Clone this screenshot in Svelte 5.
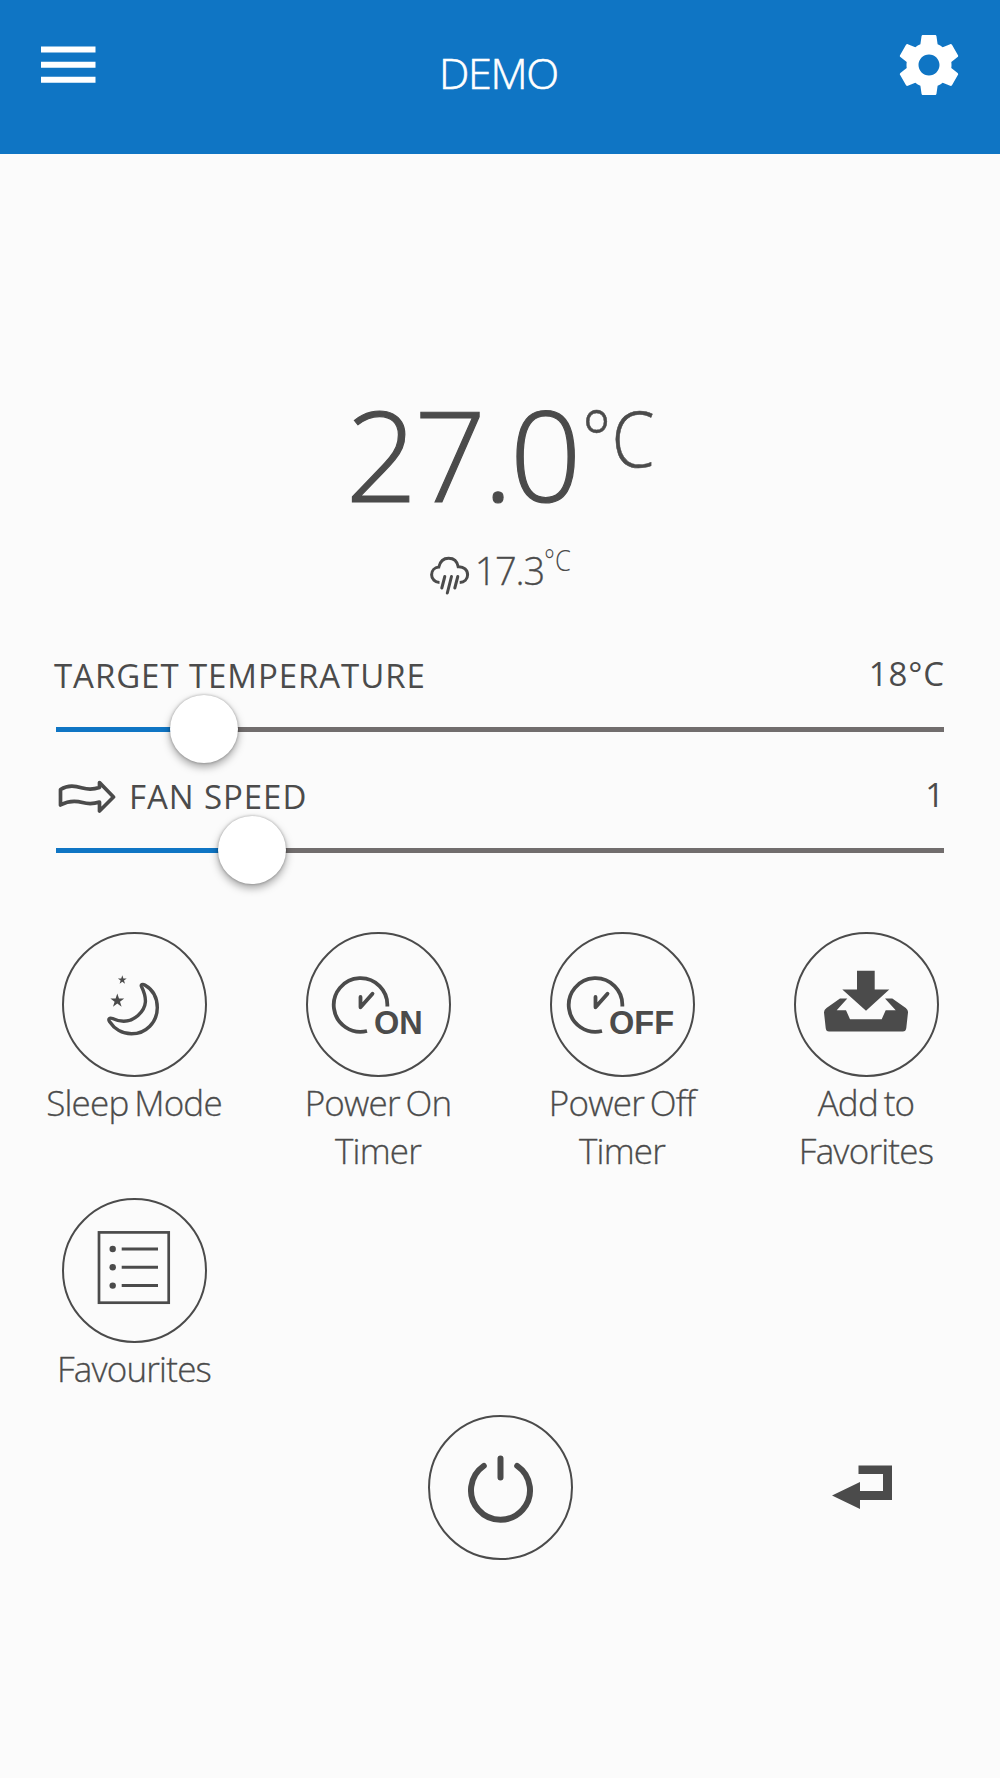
<script lang="ts">
  let roomTemperature = "27.0";
  let outdoorTemperature = "17.3";

  const sliders = [
    { id: "target", label: "TARGET TEMPERATURE", value: "18°C", position: 16.7 },
    { id: "fan", label: "FAN SPEED", value: "1", position: 22.1 },
  ];

  const actions = [
    { id: "sleep", lines: ["Sleep Mode"] },
    { id: "on", lines: ["Power On", "Timer"] },
    { id: "off", lines: ["Power Off", "Timer"] },
    { id: "add", lines: ["Add to", "Favorites"] },
    { id: "list", lines: ["Favourites"] },
  ];
</script>

<div class="screen">
  <header class="toolbar">
    <button class="icon-btn" aria-label="Menu">
      <svg width="55" height="60" viewBox="0 0 55 60">
        <path d="M0 14.5h54.5M0 29.7h54.5M0 44.8h54.5" stroke="#fff" stroke-width="6" />
      </svg>
    </button>
    <h1>DEMO</h1>
    <button class="icon-btn" aria-label="Settings">
      <svg width="60" height="60" viewBox="2.3 2 19.4 20">
        <path
          fill="#fff"
          d="M19.43 12.98c.04-.32.07-.64.07-.98s-.03-.66-.07-.98l2.11-1.65c.19-.15.24-.42.12-.64l-2-3.46c-.12-.22-.39-.3-.61-.22l-2.49 1c-.52-.4-1.08-.73-1.69-.98l-.38-2.65C14.46 2.18 14.25 2 14 2h-4c-.25 0-.46.18-.49.42l-.38 2.65c-.61.25-1.17.59-1.69.98l-2.49-1c-.23-.09-.49 0-.61.22l-2 3.46c-.13.22-.07.49.12.64l2.11 1.65c-.04.32-.07.65-.07.98s.03.66.07.98l-2.11 1.65c-.19.15-.24.42-.12.64l2 3.46c.12.22.39.3.61.22l2.49-1c.52.4 1.08.73 1.69.98l.38 2.65c.03.24.24.42.49.42h4c.25 0 .46-.18.49-.42l.38-2.65c.61-.25 1.17-.59 1.69-.98l2.49 1c.23.09.49 0 .61-.22l2-3.46c.12-.22.07-.49-.12-.64l-2.11-1.65zM12 15.5c-1.93 0-3.5-1.57-3.5-3.5s1.57-3.5 3.5-3.5 3.5 1.57 3.5 3.5-1.57 3.5-3.5 3.5z"
        />
      </svg>
    </button>
  </header>

  <section class="readings">
    <div class="room">
      <span class="room-value">{roomTemperature}</span><span class="room-unit">°C</span>
    </div>
    <div class="outdoor">
      <svg width="40" height="40" viewBox="0 0 40 40" fill="none" stroke="#4b4b4b" stroke-width="3">
        <path d="M9.5 26.5C5 26.3 1.6 23 1.6 18.7c0-4.2 3-7.3 7.2-7.7C10 5.5 13.5 2.2 18.6 2.2s8.7 3.3 9.6 8.6c5.8-.3 9.4 3.3 9.4 7.9 0 4.400-3.300 7.600-7.900 7.800" />
        <path d="M14.8 20.5l-3 11.5M21.5 20.5l-4.2 16.5M27.8 20.5l-3 11.5" stroke-linecap="round" />
      </svg>
      <span class="outdoor-value">{outdoorTemperature}</span><span class="outdoor-unit">°C</span>
    </div>
  </section>

  <section class="sliders">
    {#each sliders as slider}
      <div class="slider">
        <div class="slider-head">
          {#if slider.id === "fan"}
            <svg class="fan-icon" width="58" height="34" viewBox="0 0 58 34">
              <path
                d="M2.5 9.5c8-5 15-3.5 22-1.5 6 1.7 11 1.5 17-.5V2.5L55.5 17 41.5 31v-9c-6 2-11 2.2-17 .5-7-2-14-2-22 2.5z"
                fill="none"
                stroke="#4b4b4b"
                stroke-width="3.7"
                stroke-linejoin="round"
              />
            </svg>
          {/if}
          <span class="slider-label">{slider.label}</span>
          <span class="slider-value">{slider.value}</span>
        </div>
        <div class="track">
          <div class="fill" style="width: {slider.position}%"></div>
          <div class="thumb" style="left: {slider.position}%"></div>
        </div>
      </div>
    {/each}
  </section>

  <section class="actions">
    {#each actions as action}
      <div class="action">
        <button class="round-btn" aria-label={action.lines.join(" ")}>
          <svg width="145" height="145" viewBox="0 0 145 145">
            {#if action.id === "sleep"}
              <path
                d="M79.5 55.500C85 67 85.500 76 76 84.500 68 91.500 59 91.500 50.500 87.500c-3-1.200-4.500.8-3 3C52 97.500 60 102.800 69.500 102.800c14.500 0 25.800-11.600 25.800-26 0-10.500-5-18.500-12.500-22.800-2.300-1.200-4.100-.3-3.300 1.500z"
                fill="none"
                stroke="#4b4b4b"
                stroke-width="3.4"
              />
              <path fill="#4b4b4b" d="M60.3 44.3l1.1 3.2h3.3l-2.7 2 1 3.2-2.7-2-2.7 2 1-3.2-2.7-2h3.3zM55.3 62.5l1.7 5h5.2l-4.2 3.2 1.6 5-4.3-3.100-4.300 3.100 1.600-5-4.200-3.200h5.200z" />
            {:else if action.id === "on" || action.id === "off"}
              <g transform={action.id === "off" ? "translate(-9 0)" : undefined}>
                <g fill="none" stroke="#4b4b4b" stroke-width="3.8">
                  <path d="M81.3 75.5A26.8 26.8 0 1 0 61 100" />
                  <path d="M54.5 66v10.3L66.5 62.7" stroke-linecap="round" stroke-linejoin="round" />
                </g>
                <text class="badge" x="68" y="103">{action.id.toUpperCase()}</text>
              </g>
            {:else if action.id === "add"}
              <path
                fill="#4b4b4b"
                d="M63 39.8h17.7v18.7h14.6L72 79.8 48.3 58.5H63zM46 67.5h7.3L42.7 79.2H52l4 9h31.7l4-9h10L91 67.5h7.3l13.5 9.5q2.5 2 2.2 4.5l-1.7 15.5q-.5 3.500-3.500 3.500H35q-3 0-3.300-3.500L30 81.500q-.2-2.500 2.500-4.500z"
              />
            {:else}
              <rect x="37" y="35.4" width="69.7" height="70.3" fill="none" stroke="#4b4b4b" stroke-width="2.7" />
              {#each [52, 70.3, 88.6] as y}
                <circle cx="50.7" cy={y} r="3.2" fill="#4b4b4b" />
                <path d="M59.7 {y}h36.3" stroke="#4b4b4b" stroke-width="3" />
              {/each}
            {/if}
          </svg>
        </button>
        <div class="action-label">
          {#each action.lines as line}
            <span>{line}</span>
          {/each}
        </div>
      </div>
    {/each}
  </section>

  <footer class="bottom">
    <button class="round-btn" aria-label="Power">
      <svg width="145" height="145" viewBox="0 0 145 145" fill="none" stroke="#4b4b4b" stroke-width="6" stroke-linecap="round">
        <path d="M55.8 51.9A29.5 29.5 0 1 0 89.2 51.9M72.5 44.5v19" />
      </svg>
    </button>
    <button class="icon-btn back" aria-label="Back">
      <svg width="60" height="44" viewBox="0 0 60 44">
        <path fill="#4b4b4b" d="M26.5.5H60v34.5H28v9L0 30.5l28-13.5v9h23V9H26.5z" />
      </svg>
    </button>
  </footer>
</div>

<style>
  :global(body) {
    margin: 0;
    background: #fbfbfb;
  }

  .screen {
    width: 1000px;
    height: 1778px;
    overflow: hidden;
    background: #fbfbfb;
    color: #4b4b4b;
    font-family: "Open Sans", "Noto Sans", sans-serif;
    font-weight: 300;
  }

  button {
    padding: 0;
    border: none;
    background: none;
    cursor: pointer;
  }

  svg {
    display: block;
  }

  .toolbar {
    box-sizing: border-box;
    height: 154px;
    padding: 35px 41px 0;
    display: flex;
    justify-content: space-between;
    align-items: flex-start;
    background: #0f75c4;
    color: #fff;
  }

  h1 {
    margin: 8px 0 0 2px;
    font-size: 43px;
    line-height: 60px;
    font-weight: 300;
    letter-spacing: -1.3px;
    -webkit-text-stroke: 0.6px;
  }

  .readings {
    height: 500px;
    box-sizing: border-box;
    padding-top: 234px;
  }

  .room {
    display: flex;
    justify-content: center;
    height: 130px;
    padding-left: 8px;
    line-height: 130px;
  }

  .room-value {
    font-size: 126px;
    letter-spacing: -3.2px;
    -webkit-text-stroke: 1.2px;
  }

  .room-unit {
    padding: 4px 0 0 3px;
    font-size: 77px;
    line-height: 92px;
    -webkit-text-stroke: 0.5px;
    transform: scaleX(0.9);
    transform-origin: left;
  }

  .outdoor {
    display: flex;
    justify-content: center;
    height: 44px;
    margin-top: 30px;
    padding-left: 4px;
    line-height: 44px;
  }

  .outdoor svg {
    margin: 8px 5px 0 0;
  }

  .outdoor-value {
    font-size: 38px;
    letter-spacing: -1.2px;
    -webkit-text-stroke: 0.3px;
  }

  .outdoor-unit {
    font-size: 29px;
    line-height: 24px;
    transform: scaleX(0.88);
    transform-origin: left;
  }

  .sliders {
    padding: 0 56px;
  }

  .slider {
    height: 121px;
  }

  .slider-head {
    display: flex;
    align-items: center;
    height: 42px;
    font-size: 33px;
    font-weight: 400;
    letter-spacing: 0.93px;
  }

  .slider-label {
    margin-left: -2px;
  }

  .fan-icon {
    margin: 2px 15px 0 2px;
  }

  .slider-value {
    margin-left: auto;
    margin-right: -1px;
    padding-bottom: 3px;
  }

  .track {
    position: relative;
    height: 5px;
    margin-top: 31px;
    background: #716d6d;
  }

  .fill {
    height: 100%;
    background: #0f75c4;
  }

  .thumb {
    position: absolute;
    top: 2px;
    width: 68px;
    height: 68px;
    border-radius: 50%;
    background: #fff;
    box-shadow: 0 4px 9px rgba(0, 0, 0, 0.35), 0 0 3px rgba(0, 0, 0, 0.3);
    transform: translate(-50%, -50%);
  }

  .actions {
    display: grid;
    grid-template-columns: repeat(4, 244px);
    grid-auto-rows: 266px;
    padding: 35.5px 0 0 12px;
  }

  .action {
    display: flex;
    flex-direction: column;
    align-items: center;
  }

  .round-btn {
    box-sizing: border-box;
    width: 145px;
    height: 145px;
    border: 2.5px solid #4b4b4b;
    border-radius: 50%;
  }

  .round-btn svg {
    margin: -3px -2px -2px;
  }

  .badge {
    fill: #4b4b4b;
    font: bold 32.5px "Liberation Sans", Arial, sans-serif;
  }

  .action-label {
    display: flex;
    flex-direction: column;
    align-items: center;
    margin-top: 2px;
    font-size: 35px;
    line-height: 48.5px;
    letter-spacing: -0.8px;
    word-spacing: -2.5px;
    white-space: nowrap;
    -webkit-text-stroke: 0.3px;
  }

  .bottom {
    display: grid;
    grid-template-columns: 427.5px 145px 1fr;
    margin-top: -49px;
  }

  .bottom .round-btn {
    grid-column: 2;
  }

  .back {
    justify-self: end;
    align-self: start;
    margin: 50px 108px 0 0;
  }
</style>
